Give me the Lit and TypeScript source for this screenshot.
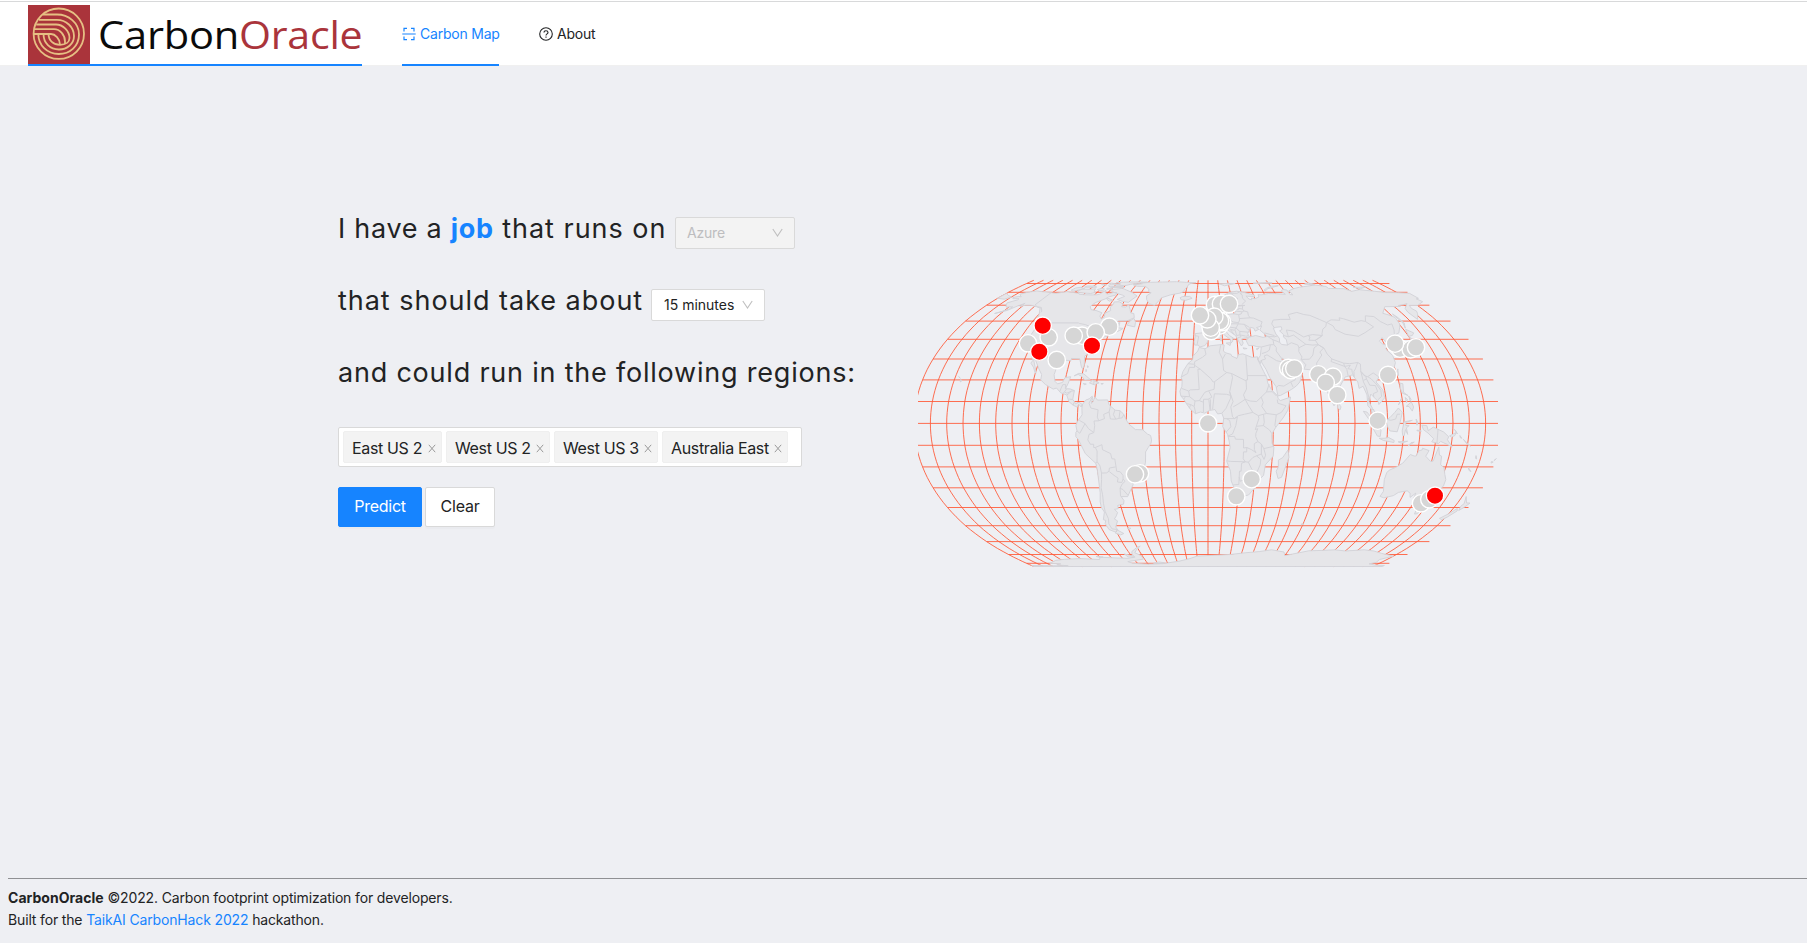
import { LitElement, html, svg, css } from "lit";
import { customElement, property } from "lit/decorators.js";

// Equal Earth projection, centred on the map's viewBox.
const CX = 1208, CY = 423.4, K = 108.6;
function project(lon: number, lat: number): [number, number] {
  const t = Math.asin((Math.sqrt(3) / 2) * Math.sin((lat * Math.PI) / 180));
  const t2 = t * t, t6 = t2 * t2 * t2;
  const l = (lon * Math.PI) / 180;
  const x = (l * Math.cos(t)) / ((Math.sqrt(3) / 2) * (1.340264 + 3 * -0.081106 * t2 + t6 * (7 * 0.000893 + 9 * 0.003796 * t2)));
  const y = t * (1.340264 - 0.081106 * t2 + t6 * (0.000893 + 0.003796 * t2));
  return [CX + K * x, CY - K * y];
}
function line(points: string): string {
  return points.trim().split(/\s+/).map((p, i) => {
    const [a, b] = p.split(",").map(Number);
    const [x, y] = project(a, b);
    return (i ? "L" : "M") + x.toFixed(1) + " " + y.toFixed(1);
  }).join("");
}
function graticule(): string {
  let d = "";
  for (let lon = -180; lon < 180; lon += 10) {
    const pts: string[] = [];
    for (let lat = -90; lat <= 90; lat += 2.5) pts.push(lon + "," + lat);
    d += line(pts.join(" "));
  }
  for (let lat = -80; lat <= 80; lat += 10) d += line(`-180,${lat} 180,${lat}`);
  return d;
}

const LAND: string[] = [
  // North and Central America
  `-168,65.6 -164.5,66.5 -161.7,66.1 -166.7,68.3 -163,69.9 -156.6,71.3 -150,70.5 -143.6,70.1 -136,69 -128,70.5 -124.4,70.1 -121,69.8 -115,68.9 -114,68.2 -108,67.8 -102,67.7 -98,67.8 -96,68.3 -94,71.9 -92,69.6 -90,68.5 -88,68.6 -85.5,69.8 -82.6,69.7 -81.2,69 -81.3,67.5 -86,66.2 -87,64.8 -93,62 -94.6,60 -94.7,58.9 -92.3,57 -88,56.5 -82.3,55.1 -82.4,53 -80,51.2 -78.6,52.5 -79.8,54.7 -76.5,56.5 -78.5,58.8 -77.4,60.7 -78,62.3 -73.8,62.4 -70,61 -69.3,58.9 -66.2,58.8 -64.6,60.3 -61.4,57 -60,55 -57.3,54.6 -55.7,52.1 -60,50.2 -66.4,50.2 -71.1,46.8 -65,49.2 -64.5,46.2 -61,45.9 -63.2,44.6 -66.1,43.6 -66.1,44.8 -70.1,43.7 -70.8,42.8 -70,41.7 -73.7,40.9 -74.3,39.5 -75.5,38 -76.3,37 -75.7,35.5 -78,33.9 -81.3,31.4 -80,27 -80.4,25.2 -81.3,25.8 -82.7,28 -84,30.1 -89.5,30.3 -89.4,29.2 -94.7,29.5 -97.2,27.6 -97.8,22.5 -96.3,19.3 -94.4,18.1 -91.4,18.8 -90.5,21 -87,21.5 -87.8,18.3 -88.9,15.9 -86,15.8 -83.2,15 -83.6,11 -81.6,9 -79.5,9.6 -77.3,8.6 -78.2,7.6 -79.6,8.8 -80.4,7.4 -83,8.3 -85.7,9.9 -87.6,13 -91.5,14 -94.6,16.2 -96.5,15.7 -102,17.9 -105.5,20 -105.7,22.5 -108.5,25.2 -112.2,29 -113.1,31.2 -114.8,31.8 -113.5,29 -111.3,26 -109.5,23.2 -110.2,23.3 -112.3,26 -115,28 -114.3,29.2 -117.2,32.6 -118.5,34 -120.6,34.6 -124,38.9 -124.4,40.4 -124.1,46.9 -124.7,48.3 -122.6,47.3 -123,49 -127.5,50.9 -130.4,54.7 -134,58.1 -138,59 -143.9,60 -148,60 -151.7,59.2 -150.6,61.3 -154,59.4 -158,56.5 -164.8,54.6 -161,56 -157.7,57.6 -157,58.9 -162,58.7 -164.7,60.5 -166,61.6 -161,63.8 -161.4,64.8 -166.4,64.7z`,
  `-77.3,8.6 -75.5,10.6 -73.4,11.2 -71.7,12.4 -71.3,11.5 -71.9,9.1 -71,9.8 -70,12.1 -68.2,10.6 -62,10.7 -60.8,8.4 -57,6 -54,5.8 -51.7,4.2 -50,1.5 -48.6,-.2 -44.5,-2.8 -40,-2.9 -37.2,-4.8 -35.2,-5.5 -34.7,-7.5 -35.1,-9 -37,-11.1 -38.7,-13 -39.2,-17.8 -41,-22 -44.6,-23.3 -48.5,-25.9 -48.7,-28.5 -53.8,-34.4 -57.8,-34.4 -58.4,-33.9 -56.8,-36.4 -57.7,-38.2 -62,-38.9 -62.3,-40.6 -65,-41 -63.5,-42.6 -65.3,-44.5 -67.5,-46.2 -65.8,-47.3 -69,-50.8 -68.4,-52.3 -71,-53.8 -74.9,-52.3 -75.6,-48.7 -74.1,-47 -75.6,-46.6 -72.7,-42.4 -73.7,-39.9 -73.2,-37.1 -71.4,-32.4 -70.1,-21.4 -70.4,-18.3 -76.2,-13.8 -79.8,-7.2 -81.2,-6.1 -81,-4 -80.3,-3.4 -80.9,-1 -80,.8 -77.2,3.9 -77.5,6.9z`,
  `-68.6,-52.7 -65.1,-54.7 -68,-55.6 -71.5,-54.4z`,
  `-60.8,-51.5 -58,-51.5 -59.3,-52.2z`,
  // Greenland, arctic islands, Iceland
  `-73,78.2 -68,76.1 -60,76 -55,73 -54,70.5 -51,69.5 -53.7,67 -52,64 -48.2,61 -43.4,60 -41,63.5 -39.8,65.5 -33,67.8 -25,69.3 -22.4,70.5 -21.7,72.5 -19.8,75.3 -19,78.5 -17,80 -12.2,81.4 -22,82.2 -32,83.5 -46,82.7 -58,82.1 -67,80.6 -65,79.6z`,
  `-61,82.4 -70,83.1 -85,82.5 -92,81.3 -87,80 -87,78.5 -81,76.2 -89,76.4 -80,77 -76,78.8 -70,80.5z`,
  `-80.3,73.8 -90,72.5 -85,70 -75,67.5 -72.5,66.5 -77,64.2 -72,62.8 -66,62 -64,64.5 -61.9,66.8 -68,69.7 -77,72.7z`,
  `-117,73 -119,71.5 -117,69.8 -105,68.9 -101,69.8 -104,71.1 -105,73.3 -110,72.8z`,
  `-125.9,71.9 -123,71 -115.5,73.5 -121,75 -124.8,74.2z`,
  `-100,73.8 -97,73.5 -96,72 -99,71.3 -102.5,72.6z`,
  `-94,72.8 -95,74 -90,74 -91,73z`,
  `-80,74.7 -92,74.8 -96,76.7 -89,75.6 -81,75.6z`,
  `-117.5,75.1 -106,75 -108,76.5 -116.3,76.5z`,
  `-96,80.6 -86,78.4 -94,78 -99,80z`,
  `-105,79.3 -99,78 -103,77.8z`,
  `-87,65.4 -80.5,63.7 -82.5,62.8 -86,64.3z`,
  `-24,65.5 -22,66.4 -16,66.5 -13.6,65 -18.7,63.5 -22.7,63.9z`,
  `-55.6,51.6 -53.5,49.3 -53,46.7 -59.3,47.7 -57.5,50.5z`,
  // Caribbean and Hawaii
  `-84.9,21.9 -82.3,23.1 -79,22.8 -74.3,20.2 -77.7,19.9 -80,21.6 -82.5,22.6z`,
  `-74.4,18.6 -72.8,19.9 -68.4,18.6 -71.3,17.7z`, `-78.3,18.3 -76.3,18 -77.5,17.8z`, `-67.2,18.3 -65.7,18.3 -66.5,17.9z`,
  `-78,26.7 -77.2,26.5 -77.3,25.8z`, `-78.2,25 -77.7,24 -78,23.8z`, `-156,20.2 -155,19.5 -155.8,19z`, `-158,21.6 -157.7,21.3 -156.5,20.8z`,
  // Europe and Asia
  `-9.5,38.7 -8.8,41.5 -9,43 -4.3,43.4 -1.7,43.4 -1.2,45.8 -4.6,48.4 -1.5,48.7 -1.8,49.7 1.5,50.6 4.7,53 8.6,53.8 8.2,57 10.6,57.7 10.5,55 14.2,54 19.6,54.4 21.3,55.3 21.6,57.4 24.3,57.2 23.5,59.2 30,59.9 22.9,59.8 21.5,61.5 25.4,65 22.1,65.7 17.8,62.7 17.1,61 18.8,60 16.4,57 14.1,55.4 12.9,55.4 11,59 8,58 5.6,58.7 5,62 10.5,64.5 14.8,67.8 19.2,69.8 25.8,71 31,70.3 41,67.4 40.1,66.3 33,66.7 34.9,64.4 37,63.9 37.2,65.2 40,64.6 44,66 44.2,68 46.8,67.7 53.7,68.9 59,68.8 68.5,68.2 66.9,71 69.2,72.8 72.8,72 72.5,68 74.9,67.8 74,71.4 80.5,73.6 87,75.1 104.4,77.7 113,75.9 113,73.8 127,73.4 131,70.9 139.9,72.4 152,70.9 160,69.7 170,69.6 180,69 180,65 177.4,64.6 179,62.5 170.3,59.9 163.5,59.9 162,57.8 163.2,56.1 162,54.8 160,53.2 156.8,51 155.5,55.4 156.8,57.8 163.7,61.2 160,60.5 154.2,59.8 155,59.1 142.2,59 135.1,54.7 138.2,53.8 141.4,52.2 140.5,48.3 138.2,46.3 134.9,43.4 130.8,42.2 127.5,39.7 129.4,37 129.1,35.1 126.4,34.4 126.2,37.7 125,40 121.6,38.9 121,40.9 117.7,39 119,37.3 122.4,37 119.2,35 121.9,31.7 121.7,28.2 118.7,24.5 113.8,22.5 110.5,21.2 108.5,21.7 105.7,19 108.9,15.3 109.3,11.7 105.2,8.6 105,10 102.6,12 101,13.4 99.2,10 101,6.9 103.4,4 103.5,1.3 101.4,2.8 100.1,6.5 98.3,8 98.6,13 97,17 94.3,16 94.2,19 91.8,22.4 88.9,21.7 86.9,21.4 82.2,16.6 80.3,15.5 79.9,10.4 77.5,8 74.8,13 72.8,19.2 72.6,21.4 70.5,20.9 68.9,22.3 67,24.7 61.5,25.1 57.4,25.8 56.5,27.1 51.5,27.9 49,30.4 48,30 50.2,26.7 51.3,24.5 54,24.1 56.4,26.3 57,24 59.8,22.5 57.7,19 55.3,17.2 52.2,15.6 45,12.8 43.3,12.6 42.6,16.8 39.1,21 37.2,25 35,28.1 34.8,29.5 34,27.8 32.6,30 34.5,31.6 36,36 33,36.2 30.6,36.8 27.6,36.7 26.2,39.5 29,41.2 33.3,42 38.3,41 41.5,41.5 37,45 39.1,47.3 35,46.3 36.5,45.4 33.5,44.4 33,46 30.7,46.5 28,43 28.9,41.2 26,40.8 23.3,40.2 24,38 22.7,36.5 21,39 19.4,41.9 15,44.5 13.6,45.5 12.4,44.6 15,42 18.4,40.2 16.9,40.4 17,39 15.7,38 15.5,40 12,42 8.8,44.4 6.5,43.2 3,43 .7,40.8 -.4,38.5 -2.1,36.7 -5.6,36 -6.5,37 -9,37z`,
  `-180,69 -175,67.3 -169.9,66 -173,64.3 -180,65z`,
  `-5.7,50.1 1.4,51.3 1.7,52.7 0,53.6 -3,56 -2,57.7 -5,58.6 -6,56.5 -3,54 -4.6,53 -5,51.7 -3,51.4z`, `-10,51.8 -6.3,52.2 -6,54.5 -8,55.1 -9.8,53.8z`,
  `11,79.6 20,80.2 27,80 22,78.5 16,76.8z`, `52,71 56,73.5 68,76.9 61,76.2 55,74 51.6,72z`, `45,80.5 60,81.3 64,80.8 50,80.2z`, `95,79 100,81 105,78.8 100,78z`, `138,75 150,75.3 143,73.5z`,
  `142,46 143.5,49 142,54.3 143.3,52.5 144.5,49z`, `140,41.6 141.6,45.4 145.3,43.4 143,42z`, `130,33 131,34.3 135.7,35.6 139.5,38 140.3,41.1 142,39.5 140.8,35.8 135.7,33.5 131,31.4z`,
  `12.4,38 15.5,38.2 15,36.7z`, `8.2,40.8 9.8,40.5 9,39z`, `8.7,42.5 9.4,43 9.2,41.4z`, `23.6,35.6 26.3,35.2 24,35z`, `32.3,35 34.5,35.6 33,34.6z`,
  // Africa and Madagascar
  `-5.9,35.8 -2,35.1 1.5,36.6 9.5,37.3 11,37 10.3,34.3 11.1,33.2 15.3,32.3 15.7,31.4 19,30.3 20.1,32.2 23,32.6 29,30.8 32.6,31.1 32.5,29.8 35.5,24 37.2,21 37.5,18.6 39.5,15.4 43.1,12.6 43.3,11.4 44.6,10.4 51.1,12 49,6 46,2.5 41.6,-1.7 39,-5 39.5,-9 40.7,-11 40.6,-15 36,-19 35.5,-24 32.8,-26 30.8,-30 27,-33.6 20,-34.8 18.3,-34 18.2,-31.7 15,-26.7 14.3,-22 11.7,-17.3 13.7,-11 13,-8 12,-5 9,-1.5 9.6,2.3 8.5,4.6 5.9,4.3 4.3,6.3 1,5.9 -2,4.7 -4.6,5.2 -7.7,4.4 -11,6.6 -13.2,8.9 -15,11 -16.8,12.5 -17.5,14.7 -16.3,17 -16.3,20 -17,21 -16,24 -13,27.8 -10,29.7 -9.8,31.5 -6.8,34z`,
  `49.5,-12.1 50.5,-15.5 47.1,-24.9 45,-25.5 43.3,-22 44.4,-20 44,-16.8 46.5,-15.7z`,
  `80,9.7 81.8,7.5 81,6.1 79.8,7z`, `108.7,19.4 110.8,20 110.3,18.5z`, `120.1,23 121.8,25.2 120.9,22z`,
  // Maritime south-east Asia
  `95.3,5.5 97.5,5.2 103,0 106,-3.1 105.8,-5.9 104,-5.8 100.5,-1.5 98.6,1.8z`, `105.2,-6.8 108.3,-6.8 111,-6.4 114.5,-7.8 114.5,-8.7 108,-7.8z`, `109,1.5 111.5,2.7 114.6,5 117,7 119.2,5.1 117.8,1 116,-3.8 111.5,-3.4 110,-1.5z`, `119,-3.4 120,.7 125.1,1.4 121,.4 121.2,-1 123.2,-1 121.5,-2 122.5,-5 121,-2.8 120.4,-5.6 119.5,-5.5z`,
  `131,-.8 134,-1 135,-3.3 138,-1.7 144.5,-3.9 147.8,-6.1 147.2,-7.4 150.7,-10.6 147.2,-9.5 143.2,-8.2 142,-9.2 137.7,-8.4 138.7,-7 135,-4.4 132,-2.8z`,
  `148.3,-5.7 152,-4.2 151.5,-5.5 149.5,-6.3z`, `150.9,-2.7 153,-4.8 152,-3.5z`, `154.6,-5.5 156,-6.8 155,-6.5z`, `157,-7.3 162,-10.4 159.7,-9.5z`, `123.5,-10.3 127,-8.5 125,-8.8z`, `117,-8.4 122.8,-8.1 119,-9z`, `127.5,2 128.5,.5 128,-.8z`, `128,-3 130.8,-3.5 128.2,-3.4z`,
  `120.6,18.5 122.2,18.2 121.5,14.2 124,12.7 120.7,13.8 120,16z`, `122,11.8 123.2,11 122.4,9.5z`, `124.3,12.5 125.5,11 124.8,10.1z`, `122,7.8 125.4,9.8 126.4,7.5 125.4,5.6 123.6,7.7z`, `117.2,8.4 119.5,11.3 118.4,9.6z`,
  // Oceania
  `113.7,-22.6 115,-21.5 119,-20 122.2,-18.2 125.7,-14.2 128.3,-14.9 129.6,-14.9 130.6,-12.5 132.6,-12.1 132.6,-11.3 136.9,-12.4 135.5,-15 139.3,-17.4 140.9,-17.3 142.5,-10.7 143.9,-14.5 145.4,-15 146.2,-18.9 149,-20.4 151,-23.5 153.1,-26 153.5,-29 151,-34 150,-37.4 147,-38.2 144.5,-38.2 140.6,-38 138.2,-35.6 137.8,-32.6 135.5,-34.8 134,-32.7 131.3,-31.5 126,-32.3 123.7,-33.9 118,-35 115,-34.3 115.8,-31.8 113.5,-26z`,
  `144.7,-40.8 148.3,-40.9 147.8,-43.3 146,-43.5z`, `172.7,-34.4 176,-37.6 178.5,-37.7 177,-39.8 175,-41.6 173.9,-39.3 174.8,-38z`, `172.8,-40.5 174.2,-41.8 171,-45.2 169,-46.6 166.5,-45.9 170,-43.3z`,
  `164,-20.1 167,-22.2 165.5,-21.7z`, `177.5,-17.5 178.7,-17.7 177.6,-18.2z`, `178.8,-17 180,-16.1 179.3,-16.8z`, `166.7,-14.7 167.8,-16.3 167,-16z`, `69,-48.8 70.5,-49.2 69,-49.6z`,
  // Antarctica
  `-180,-84.5 -163,-85.2 -150,-85.3 -143,-85 -153,-83.5 -152,-82 -147,-81 -157,-80 -146,-76 -136,-74.7 -120,-74 -103,-75 -100,-72.5 -85,-73.3 -75,-73.7 -67.5,-72.5 -68.5,-70 -67,-67.5 -60,-64 -57,-63.3 -62,-66 -65,-68.5 -61,-71 -61,-74.5 -70,-76 -78,-77.5 -75,-80 -60,-81.5 -50,-81 -40,-79.5 -35,-78.3 -28,-77 -17,-74 -10,-71.5 0,-71 20,-70 33,-68.5 45,-67.5 55,-66 67,-67.8 70,-71 76,-69.5 88,-66.8 100,-66.5 110,-66 120,-67 135,-66 145,-67 155,-69 170,-71.5 163,-75 165,-78.5 161,-81 170,-83.5 180,-84.5 180,-90 -180,-90z`,
  `-68.5,-71.5 -75,-69.5 -74,-72.2 -69,-72.5z`, `-48,-78 -54,-80 -45,-80.5 -43,-79z`, `-103,-71.8 -97,-72.3 -100,-72.6z`,
];

const LAKES: string[] = [
  `47,46 49,46.5 53,46.8 53,45.3 51,44.5 53,42.5 52.5,41.2 54,40 54,37 50,37.3 49,38.5 49.5,40.5 47.8,42.8z`,
];

const BORDERS = `-141,69.6 -141,60.3 -137.5,59 -133.5,58.5 -130,56 -130,55.3
-123,49 -95.2,49 -94.6,48.7 -89.6,48 -84.8,46.7 -82.5,45.3 -83,42 -79,42.8 -76,44 -74.8,45 -71.4,45.2 -69,47.3 -67.8,45.7 -67,44.9
-117.1,32.5 -111,31.3 -106.5,31.7 -103,29 -101,29.5 -99,26.4 -97.2,25.9
-92.2,14.5 -91.7,16.1 -91,17.8 -89.1,17.8 -89,15.9
-90,13.8 -89.3,14.4 -88.2,15.7
-89.3,14.4 -87.7,13.8 -85,14.7 -83.2,15
-87.4,13 -86,13.9 -85,14.7
-85.7,11.1 -83.7,10.9
-83,8.3 -82.6,9.5
-77.8,7.5 -77.3,8.6
-71.7,11.9 -73.3,9.2 -72,7 -67.5,6.2 -67.8,2.8 -66.9,1.2 -69.8,1.1 -69.4,-1 -70,-4.2 -73.2,-2.4 -75.3,-.1 -78.8,1.4
-75.3,-.1 -78.6,-4.5 -80.3,-3.4
-70,-4.2 -73,-5 -73.9,-7.5 -72.5,-9.5 -70.5,-9.5 -70.6,-11 -69.6,-11 -68.7,-12.6 -69.5,-17.5 -70.4,-18.3
-69.6,-11 -65.4,-9.7 -65.3,-12 -60.5,-13.8 -60,-16.2 -58.2,-16.3 -58,-20.1 -58,-22 -55.8,-22.3 -54.3,-24 -54.6,-25.7 -53.6,-26.9 -55.8,-28.2 -57.6,-30.2 -55.9,-30.9 -53.4,-33.7
-69.5,-17.5 -68,-19.5 -67.8,-22.9 -68.5,-26 -70,-30 -70.2,-33.5 -71.3,-38 -72,-42 -71.7,-46 -73,-49 -72.3,-51.9 -68.5,-52.3
-67.8,-22.9 -64.5,-22.8 -62.8,-22 -62.3,-20.5 -58.2,-20
-62.7,-22.2 -60,-24 -57.7,-25.3 -58.6,-27.2 -55.8,-27.4 -54.6,-25.7
-57.6,-30.2 -58.4,-33.9
-66.9,1.2 -63.4,2.2 -64,4.1 -60.7,5.2 -60,8
-60.7,5.2 -59.8,2 -56.5,1.9 -54.5,2.3 -52.6,2.5 -51.6,4
-57.2,6 -58,4 -56.5,1.9
-54,5.6 -54.5,2.3
-71.7,19.7 -71.7,18
-9,41.9 -6.5,41.6 -7.4,37.2
-1.8,43.3 3.2,42.4
2.5,51 6,50.1 8.2,49 7.5,47.5 6,46.2 7.6,43.8
6,50.1 6,51.9 7,53.4
7.5,47.5 9.6,47.5 13,47.5 13,48.6 17,48.5 16,46.8 13.7,46.5 10.4,46.8 7,45.9
13,48.6 12.2,50.3 15,51 14.3,53.9
15,51 18.8,49.5 22.5,49.1 23.6,50.7 23.5,53.9 19.7,54.4
17,48.5 22.1,48.4 22.5,49.1
22.1,48.4 26.6,48.2 28.2,45.5 29.7,45.2
22.1,48.4 20.2,46.1 16.5,46.5 13.7,45.5
20.2,46.1 22.6,44.2 28.5,43.8
22.6,44.2 22.4,42.3 26.3,41.7
20.2,46.1 19,44.9 16,45.2 18.5,42.5
19.4,44.9 20,42 22.4,42.3 23,41.3 21,40.9 20,39.7
23.5,53.9 25.5,54.3 26.6,55.7 21,56.2
26.6,55.7 28.2,56.2 27.3,57.5 24.3,57.9
27.3,57.5 28,59.5
23.6,51.5 31.8,52 30.8,53.5 30.9,55.6 28.2,56.2
31.8,52 34.4,51.8 40,49.6 38.2,47.2
26.6,48.2 30,46.4
27.7,60.5 31.5,62.9 29.5,65 30,67.7 28.6,69 31,69.6
11,59 12.5,61 12.6,64 15,66 18,68.5 20.6,69.1 24,65.8
20.6,69.1 25.7,69 28,70 28.6,69
48,46 46.7,48.4 48.6,50.6 54.5,51 61.6,51 61.6,53.9 69,55.3 73.5,54 77.8,53.4 83.4,51 87.3,49.2 85.5,47 82.3,45.5 80.3,43 80,42 73.5,42.5 70,42 66.6,41.2 61,44.4 56,45 56,41.3 53,42
56,41.3 60,42.2 66.5,37.4 61.2,35.6 61,37 57,38.2 53.8,37
87.3,49.2 92,50.8 98.3,50.5 98.9,52 102,51.3 108,49.4 114,50.3 116.7,49.8 119.8,46.7 115,45 111,43.5 105,41.6 96.4,42.7 91,45.2 90.9,47.2 87.8,49.2
116.7,49.8 120,53.2 126,52.7 127.7,49.8 131,47.8 134.7,48.4 133,45 130.7,42.4
124.3,40 128,42 130.7,42.4
126.5,37.8 128.4,38.6
80,42 73.9,39.5 74.9,37.2 78,35.5 79,32.5 81.1,30 88,28 91.7,27.7 97.3,28.3 98.7,27.5 97.6,24 99,22 101.2,21.5 105.3,23.3 108,21.5
80,42 76.5,40.4 73.7,39.4 69.5,39.5 71,41.2 70,42
66.5,37.4 71.2,37 74.9,37.2 71.3,35.5 69.3,32 66.4,29.9 60.9,29.8
61.2,35.6 60.5,33.7 61.8,31 60.9,29.8 63.3,27.2 61.6,25.2
74.9,37.2 77.8,35.5 74.5,33.5 75.2,32 70.5,28 70,25 68.2,23.7
81.1,30 80.1,28.8 88.1,26.4 88,28
88.1,26.4 89,25 88.9,21.8
88.1,26.4 92,26.9 89.8,25.3 92.2,25 92,23.6 92.6,21.5
97.3,28.3 94.6,25.2 93.2,24 92.6,21.5
97.6,24 97.8,19 98.8,16.5 99.5,12 98.7,10
100.1,20.4 101.3,17.5 104.8,17.3 105.5,14.5 102.6,13.6 102.6,12
101.2,21.5 103,20.5 105.5,18 107.6,15.2 107.5,12.3 105,10.8
97.6,24 100,21.6 100.1,20.4 98,19.8
100.1,6.5 102,6.2
26.6,41.6 28,42
36,36 42.4,37.2 44.8,37.2 44.8,39.7 41.5,41.5
44.8,37.2 46,35.7 45.5,34 48.5,30
44.8,39.7 48,38.8 48.8,38.3
41.5,41.5 46.5,41.3 48.5,41.8
40,43.4 46.6,41.9
42.4,37.2 41,34.4 38.8,33.4 35.7,32.7
39,32.1 44.7,29.2 48.4,28.5
39,32.1 37,31.5 37.7,30 35,29.4
42.8,16.4 44,17.4 47.5,17.1 52,19 55,20 55.7,22 52,23 51.3,24.5
53.1,16.7 52,19
55.2,22.7 56.1,26
-2.2,35.1 -1.3,32.3 -3.6,30.9 -8.7,28.7 -8.7,27.4 -13,27.7
-8.7,27.4 -8.7,25.9 -12,25.9 -13,23 -17,21.3
-8.7,27 -4.9,25 -6.5,25 -5.5,15.5 -11,15.3 -12,14.8 -16.5,16
-4.9,25 1.8,20.6 3.2,19 4.2,19.2 12,23.5 10,24.5 9.5,30 7.5,33.3 8.6,36.9
9.5,30 11.5,32.5
12,23.5 15,23 24,19.5 24,20 25,20 25,31.6
25,22 37,22
15,23 15.5,21 13.5,14.4 14,12.8 11.5,13.3 4,13.5 3.6,11.5 2.8,6.4
4.2,19.2 3.8,15.6 0.4,14.9 -2,14.2 -5.4,10.4 -8,10.2 -11.4,12.2 -12,14.8
0.4,14.9 2.4,12 0,11 -2.8,11 -2.8,5.1
.5,11 1.2,6.1
1.5,11 1.6,6.2
-5.4,10.4 -2.8,9.6
-8,10.2 -8.5,7.7 -7.5,4.4
-8.5,7.7 -10.7,8.6 -13.3,9
-10.7,8.6 -11.4,6.9
-11.4,12.2 -16.7,12.4
-13.7,12.5 -15,11
13.5,14.4 15.5,10 14,7.5 15,3 16.2,2.2 11.3,2.2 9.8,2.2
14,12.8 14,11.5 11,6.8 8.6,4.7
15.5,7.5 19,9 23,11 22,13 24,15.7 24,19.5
23,11 24.5,8.7 27.5,5 22.5,4.2 18.6,3.5 16.2,2.2
23,11 26,10.2 30,10 33,12 34,9.5 33,7.8 36,4.5 41.9,3.9 45,5 48,8 43,9.2 42.8,10.9
33,12 36.4,14.4 38.4,18
36.4,14.4 40,14.5 42.4,12.5
27.5,5 30.9,3.5 34,4.2 36,4.5
41.9,3.9 41,-.9 41.6,-1.7
34,4.2 34.5,.5 33.9,-1 37.7,-3 39.2,-4.7
30.9,3.5 31.2,2.2 29.6,-1.3 33.9,-1
29.6,-1.3 29,-2.8 30.5,-2.4 29.4,-4.5 29.3,-6 30.7,-8.3 32.9,-9.4 34.5,-11.5 40.4,-10.5
30.7,-8.3 28.5,-9.2 28.7,-12 29.8,-13.4 27,-12 24,-11 22,-11.2 21.8,-7.3 16.9,-7.2 16.3,-5.9 12.3,-6
24,-11 24,-13 22,-13 22,-16.2 23.4,-17.6 14,-17.4 11.8,-17.2
16.2,2.2 18,3 17,-1 15,-4.8 12.2,-5.8
11.3,2.2 13.3,1.3 14,-1.5 11.1,-4
23.4,-17.6 25.3,-17.8 28,-15.6 30.2,-14.8 33.2,-14 32.9,-9.4
25.3,-17.8 28,-21.5 31.2,-22.3 32.8,-19 33,-16.5 30.2,-14.8
33.2,-14 35,-16.5 35.8,-14.5 34.5,-11.5
28,-21.5 25.5,-25.6 20.8,-26.8 20,-24.8 20,-28.4 16.5,-28.6
20,-24.8 20,-22 21,-22 21,-18.3 23.4,-17.6
31.2,-22.3 32,-26.8 32.9,-26.9
109.5,1.8 112,1.4 115,2 116,4.2 117.8,4.2
141,-2.6 141,-9.1
-73,78 -67,80`.split("\n");

const REGIONS: [number, number][] = [
  [1219.5, 325.5], [1211.3, 331], [1211, 326], [1222, 322], [1218, 315], [1215, 305], [1221, 304], [1229, 304],
  [1220, 321], [1214.3, 316.7], [1210.7, 327.7], [1207.3, 319.3], [1200, 315.3],
  [1028, 343.3], [1048.7, 337.3], [1056.7, 360], [1082, 335.7], [1109.3, 326.7], [1095.7, 332.3], [1073.7, 335.7],
  [1288.3, 368], [1291, 370], [1294.3, 368.5], [1318.3, 374.3], [1333, 376.7], [1325.7, 382.7], [1337.3, 395],
  [1388, 375], [1400, 348.7], [1410.7, 349.3], [1395, 343.7], [1416, 347.3], [1377.7, 420.7],
  [1140, 473.3], [1135, 474.3], [1208, 423.3], [1251.7, 479.2], [1236.3, 496.3], [1421, 503.3], [1429.3, 499.3],
];
const SELECTED: [number, number][] = [[1042.7, 325.7], [1039.3, 351.7], [1092, 345.7], [1435, 495.7]];

@customElement("world-map")
class WorldMap extends LitElement {
  static styles = css`
    :host { display: block; width: 580px; height: 435px; }
    svg { display: block; }
    .grid { fill: none; stroke: #ff5533; stroke-width: 0.85; }
    .land { fill: #e6e6e9; stroke: #d3d3d8; stroke-width: 0.95; stroke-linejoin: round; }
    .lake { fill: #eeeff3; stroke: #d3d3d8; stroke-width: 0.95; }
    .border { fill: none; stroke: #d3d3d8; stroke-width: 0.95; stroke-linejoin: round; }
    .pin { fill: #d6d6d6; stroke: #fff; stroke-width: 1.4; }
    .on { fill: #ff0000; }
  `;
  render() {
    const close = (s: string) => line(s.replace("z", "")) + "Z";
    return html`<svg width="580" height="435" viewBox="918 206 580 435">
      <path class="grid" d=${graticule()}></path>
      <path class="land" d=${LAND.map(close).join("")}></path>
      <path class="lake" d=${LAKES.map(close).join("")}></path>
      <path class="border" d=${BORDERS.map(line).join("")}></path>
      ${REGIONS.map(([x, y]) => svg`<circle class="pin" cx=${x} cy=${y} r="8.7"></circle>`)}
      ${SELECTED.map(([x, y]) => svg`<circle class="pin on" cx=${x} cy=${y} r="8.7"></circle>`)}
    </svg>`;
  }
}

@customElement("drop-select")
class DropSelect extends LitElement {
  @property() label = "";
  @property({ type: Boolean, reflect: true }) disabled = false;
  static styles = css`
    :host { box-sizing: border-box; display: flex; align-items: center; justify-content: space-between; height: 32px; padding: 0 11px 0 12px;
      border: 1px solid #d9d9d9; border-radius: 2px; background: #fff; color: #222; font: 14px/30px Inter, sans-serif; letter-spacing: 0; }
    :host([disabled]) { background: #f3f3f3; color: #bdbdbf; padding-left: 11px; letter-spacing: -0.2px; }
    svg { display: block; fill: none; stroke: #bfbfbf; stroke-width: 1.1; }
  `;
  render() {
    return html`<span>${this.label}</span><svg width="11" height="10" viewBox="0 0 11 10"><path d="M.8 1L5.5 8L10.2 1"></path></svg>`;
  }
}

@customElement("app-root")
class AppRoot extends LitElement {
  static styles = css`
    :host { display: flex; flex-direction: column; height: 943px; background: #eeeff3; color: #222324; font: 14px/22px Inter, sans-serif; overflow: hidden; }
    .header { box-sizing: border-box; height: 66px; flex: none; display: flex; align-items: stretch; padding-left: 28px; background: #fff; border-top: 1px solid #fff; box-shadow: inset 0 1px #d8d9da, inset 0 -1px #f0f0f0; }
    .item { box-sizing: border-box; display: flex; align-items: center; border-bottom: 2px solid transparent; padding-top: 3px; white-space: nowrap; letter-spacing: -0.22px; }
    .active { border-color: #1684ff; color: #1684ff; }
    .brand { width: 334px; align-items: flex-start; padding-top: 4px; }
    .map-link { width: 97px; margin-left: 40px; }
    .about { margin-left: 40px; }
    .item svg { display: block; }
    .glyph { margin-right: 4px; flex: none; }
    .wordmark { font: 39px "Open Sans", sans-serif; }
    .main { flex: 1; display: flex; padding: 0 0 0 338px; }
    .form { width: 580px; padding-top: 127px; }
    .sentence { display: flex; height: 72px; font-size: 27px; line-height: 72px; letter-spacing: 0.79px; white-space: pre; }
    .lead-cloud { width: 337px; letter-spacing: 0.7px; }
    .tail { letter-spacing: 0.98px; }
    .lead-time { width: 313px; letter-spacing: 0.97px; }
    .sentence b { color: #1684ff; }
    .sentence drop-select { margin-top: 24px; }
    .cloud { width: 120px; }
    .time { width: 114px; }
    .tags { box-sizing: border-box; width: 464px; height: 40px; margin-top: 18px; display: flex; gap: 4px; padding: 3px 4px; border: 1px solid #d9d9d9; border-radius: 2px; background: #fff; }
    .tag { box-sizing: border-box; height: 32px; display: flex; align-items: center; justify-content: space-between; padding: 2px 5px 0 8px; border: 1px solid #efefef; border-radius: 2px; background: #f3f3f3; font-size: 16px; letter-spacing: -0.35px; white-space: nowrap; }
    .tag svg { fill: none; stroke: #9a9a9a; stroke-width: 1; }
    .buttons { display: flex; gap: 3px; margin-top: 20px; }
    .button { box-sizing: border-box; height: 40px; display: flex; align-items: center; justify-content: center; font-size: 16px; letter-spacing: -0.25px; border-radius: 2px; border: 1px solid #d9d9d9; background: #fff; box-shadow: 0 2px 0 rgba(0,0,0,.016); padding-bottom: 3px; }
    .primary { width: 84px; background: #1684ff; border-color: #1684ff; color: #fff; }
    .clear { width: 70px; }
    world-map { margin-top: 140px; }
    .footer { flex: none; height: 65px; margin-left: 8px; border-top: 1px solid #8f9093; padding-top: 8px; box-sizing: border-box; letter-spacing: -0.15px; }
    .footer b { letter-spacing: 0.03px; }
    .footer p { margin: 0; }
    .footer a { color: #1684ff; }
  `;
  private tags: [string, number][] = [["East US 2", 99], ["West US 2", 104], ["West US 3", 104], ["Australia East", 126]];
  render() {
    return html`
      <div class="header">
        <div class="item active brand">
          <svg width="334" height="59" viewBox="28 5 334 59">
            <rect x="28" y="5" width="62" height="59" fill="#aa343b"></rect>
            <g fill="none" stroke="#e6bf83" stroke-width="1.8">
              <circle cx="58.8" cy="33.7" r="25.2"></circle>
              <path d="M43 14.5H57C68.5 14.5 79 23 79 34.5C79 46 70 54 58.8 54C47 54 38.3 45 38.3 34H51C55 34 60 39 60 44.5"></path>
              <path d="M39 19.8H57C66 19.8 74 27 74 36C74 44 67 49.5 59 49.5C50 49.5 43.5 43 43.5 34"></path>
              <path d="M36.2 24.5H56C63 24.5 69.5 31 69.5 38C69.5 42 66 44.8 60 44.8C53.5 44.8 48.5 40.5 48.5 34"></path>
              <path d="M34 29.2H54C60 29.2 65 35 65 41.5V44M34 34H39"></path>
            </g>
            <text class="wordmark" x="98" y="48.5" textLength="141" lengthAdjust="spacingAndGlyphs" fill="#0b0b0b">Carbon</text>
            <text class="wordmark" x="239" y="48.5" textLength="123.5" lengthAdjust="spacingAndGlyphs" fill="#aa343b">Oracle</text>
          </svg>
        </div>
        <div class="item active map-link">
          <svg class="glyph" width="14" height="14" viewBox="0 0 14 14" fill="none" stroke="#1684ff" stroke-width="1.2"><path d="M2 4.5V1.3H5M9 1.3H12V4.5M2 9.5V12.7H5M9 12.7H12V9.5M.3 7H13.7"></path></svg>
          <span>Carbon Map</span>
        </div>
        <div class="item about">
          <svg class="glyph" width="14" height="14" viewBox="0 0 14 14" fill="none" stroke="#222324" stroke-width="1.1"><circle cx="7" cy="7" r="6.3"></circle><path d="M5 5.6C5 4.3 5.9 3.7 7 3.7S9 4.4 9 5.5C9 6.9 7 6.8 7 8.5M7 9.5V10.7"></path></svg>
          <span>About</span>
        </div>
      </div>
      <div class="main">
        <div class="form">
          <div class="sentence"><span class="lead-cloud">I have a <b>job</b><span class="tail"> that runs on </span></span><drop-select class="cloud" label="Azure" disabled></drop-select></div>
          <div class="sentence"><span class="lead-time">that should take about </span><drop-select class="time" label="15 minutes"></drop-select></div>
          <div class="sentence"><span>and could run in the following regions:</span></div>
          <div class="tags">
            ${this.tags.map(([name, w]) => html`<div class="tag" style="width:${w}px"><span>${name}</span><svg width="8" height="9" viewBox="0 0 8 9"><path d="M.8 .8L7.2 8.2M7.2 .8L.8 8.2"></path></svg></div>`)}
          </div>
          <div class="buttons"><div class="button primary">Predict</div><div class="button clear">Clear</div></div>
        </div>
        <world-map></world-map>
      </div>
      <div class="footer">
        <p><b>CarbonOracle</b> ©2022. Carbon footprint optimization for developers.</p>
        <p>Built for the <a>TaikAI CarbonHack 2022</a> hackathon.</p>
      </div>`;
  }
}
